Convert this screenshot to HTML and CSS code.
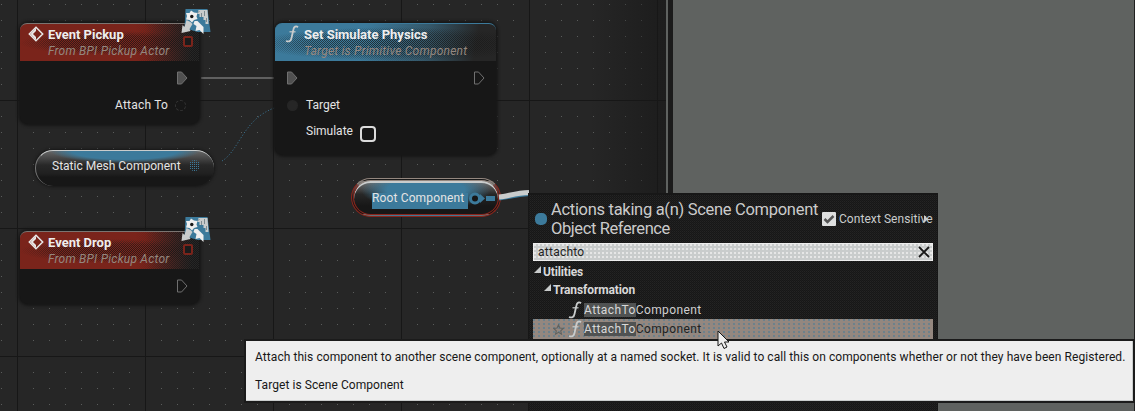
FILE: index.html
```html
<!DOCTYPE html>
<html lang="en">
<head>
<meta charset="utf-8">
<title>Event Graph</title>
<link rel="stylesheet" href="styles.css">
</head>
<body>
<svg class="defs" width="0" height="0">
  <defs>
    <symbol id="badge" viewBox="0 0 30 28">
      <path d="M4 1H26L29 24H16L3 20Z" fill="#3c7a9b"/>
      <path d="M17 2H26L27 16H24V12H22V9H18V6H16Z" fill="#c9cccc"/>
      <path d="M20 5V9M23 3V8M18 3L16 5M25 10V14" stroke="#7d8a8f"/>
      <path d="M5 12L9 14L11 16L8 21L9 23L0 25L1 17L3 19Z" fill="#c9cccc"/>
      <path d="M13 13L16 13L18 15L22 19L22 26L18 22L14 23L15 18L12 16Z" fill="#eee"/>
      <path d="M9.500 2.500L12.500 4.500L16 5L15 8.500L16 11L12.500 12L10.500 14.500L8 12L4.500 11.500L5.500 8L4.500 5L8 5Z" fill="#eee"/>
      <circle cx="10.300" cy="8.500" r="1.700" fill="#171717"/>
    </symbol>
    <symbol id="exec" viewBox="0 0 12 14">
      <path d="M1.500 1H5.500L11 7L5.500 13H1.500Z" fill="inherit" stroke="#707070"/>
    </symbol>
    <symbol id="func" viewBox="0 0 14 18">
      <path d="M13 2.200C11 .5 9 1.500 8.400 4.500L6.500 13C5.900 16 4.300 17.200 1 16" fill="none" stroke="#c9cccc" stroke-width="1.800"/>
      <path d="M4.500 6.800H10.500" stroke="#c9cccc" stroke-width="1.200"/>
    </symbol>
    <symbol id="event" viewBox="0 0 16 16">
      <path d="M8 1.300L14.700 8L8 14.700L1.300 8Z" fill="none" stroke="#e8e8e8" stroke-width="1.500"/>
      <path d="M8 2V14L2.500 8Z" fill="#e8e8e8"/><path d="M5 8L8 5V11Z" fill="#7a241b"/>
    </symbol>
  </defs>
</svg>
<main class="editor">
  <section class="graph">
    <svg class="wires" width="667" height="411">
      <path d="M201 78H274" stroke="#606060" stroke-width="2"/>
      <path d="M275 78H286" stroke="#3a3a3a" stroke-dasharray="2 1"/>
      <path d="M222 161C240 150 243 118 277 107" fill="none" stroke="#3c7a9b" stroke-dasharray="1 2"/>
    </svg>

    <article class="node event pickup">
      <header class="head red"><svg class="event-icon"><use href="#event"/></svg><div><h2 class="t-pickup">Event Pickup</h2><p class="t-from">From BPI Pickup Actor</p></div></header>
      <div class="pin out exec-row"><svg class="exec filled"><use href="#exec"/></svg></div>
      <div class="pin out attach"><span class="t-attach">Attach To</span><i class="round"></i></div>
      <i class="delegate"></i><svg class="badge"><use href="#badge"/></svg>
    </article>

    <article class="node physics">
      <header class="head blue"><svg class="func-icon"><use href="#func"/></svg><div><h2 class="t-physics">Set Simulate Physics</h2><p class="t-primitive">Target is Primitive Component</p></div></header>
      <div class="pin both"><svg class="exec filled"><use href="#exec"/></svg><svg class="exec"><use href="#exec"/></svg></div>
      <div class="pin target"><i class="round solid"></i><span class="t-target">Target</span></div>
      <div class="pin simulate"><span class="t-simulate">Simulate</span><i class="box"></i></div>
    </article>

    <article class="node event drop">
      <header class="head red"><svg class="event-icon"><use href="#event"/></svg><div><h2 class="t-drop">Event Drop</h2><p class="t-from">From BPI Pickup Actor</p></div></header>
      <div class="pin out exec-row"><svg class="exec"><use href="#exec"/></svg></div>
      <i class="delegate"></i><svg class="badge"><use href="#badge"/></svg>
    </article>

    <div class="pill mesh"><span class="t-mesh">Static Mesh Component</span><i class="mesh-pin"></i></div>
    <div class="pill root"><span class="t-root">Root Component</span></div>
    <svg class="wires" width="667" height="411">
      <circle cx="475" cy="198.500" r="4.500" fill="#171717" stroke="#3c7a9b" stroke-width="3"/>
      <path d="M480 194L485 198.500L480 203Z" fill="#3c7a9b"/>
      <path d="M486 198.500H495" stroke="#3c7a9b" stroke-width="5"/>
      <path d="M499 198C508 197 515 194.500 529 193.500" fill="none" stroke="#3c7a9b" stroke-width="5"/>
      <path d="M499 197C508 196 516 193 529 192.500" fill="none" stroke="#c9cccc" stroke-width="5"/>
    </svg>
  </section>
  <aside class="empty"></aside>
</main>

<section class="menu">
  <div class="menu-head">
    <i class="type-dot"></i>
    <h1><span class="t-title1">Actions taking a(n) Scene Component</span><br><span class="t-title2">Object Reference</span></h1>
    <label class="context"><svg width="14" height="14" viewBox="0 0 14 14"><rect width="14" height="14" rx="1" fill="#dedfdf"/><path d="M2.500 7L5.500 10L11.500 4" fill="none" stroke="#555" stroke-width="2.500"/></svg><span class="t-context">Context Sensitive</span></label>
    <i class="expander"></i>
  </div>
  <div class="search"><span class="t-search">attachto</span><svg width="12" height="12" viewBox="0 0 12 12"><path d="M1 1L11 11M11 1L1 11" stroke="#171717" stroke-width="1.800"/></svg></div>
  <div class="cat"><i></i><span class="t-util">Utilities</span></div>
  <div class="cat sub"><i></i><span class="t-trans">Transformation</span></div>
  <div class="item"><svg class="func-icon"><use href="#func"/></svg><span class="t-action"><mark>AttachTo</mark>Component</span></div>
  <div class="item selected"><svg class="star" viewBox="0 0 10 10"><path d="M5 .8L6.300 3.700L9.300 4L7 6.200L7.700 9.200L5 7.600L2.300 9.200L3 6.200L.7 4L3.700 3.700Z" fill="none" stroke="#5f6260"/></svg><svg class="func-icon"><use href="#func"/></svg><span class="t-action"><mark>AttachTo</mark>Component</span></div>
</section>

<aside class="tooltip"><p class="t-tip1">Attach this component to another scene component, optionally at a named socket. It is valid to call this on components whether or not they have been Registered.</p><p class="t-tip2">Target is Scene Component</p></aside>
<svg class="cursor" width="13" height="20" viewBox="0 0 13 20"><path d="M1 1V16L4.500 13L7 18.500L10 17L7.500 12H12Z" fill="#eee" stroke="#171717"/></svg>
</body>
</html>
```
FILE: styles.css
```css
* { box-sizing: border-box; }
body { margin: 0; width: 1135px; height: 411px; overflow: hidden; position: relative; background: #171717; color: #e4e4e4; font: 12px/16px Roboto, sans-serif; }
h1, h2, p { margin: 0; }
span, h2, p { white-space: nowrap; }
h2, p, span { width: max-content; }
svg { display: block; flex: none; }
i { display: block; flex: none; }
.defs { position: absolute; }
.editor { display: flex; height: 411px; }
.graph { position: relative; width: 673px; flex: none; border-right: 5px solid #1b1b1b; background:
  linear-gradient(#5f6260, #5f6260) 666px 0 / 2px 411px no-repeat,
  linear-gradient(90deg, transparent 590px, #1717178c 655px),
  linear-gradient(#171717, #171717) 0 100px / 100% 1px no-repeat,
  linear-gradient(#171717, #171717) 0 228px / 100% 1px no-repeat,
  linear-gradient(#171717, #171717) 0 356px / 100% 1px no-repeat,
  linear-gradient(90deg, #171717 1px, transparent 1px) 17px 0 / 128px 100%,
  conic-gradient(from 0deg at 1px 1px, transparent 270deg, #5a5c5b 270deg) 1px 4px / 16px 16px,
  #262626; }
.empty { flex: 1; background: #5f6260; border-right: 1px solid #202020; }
.wires { position: absolute; left: 0; top: 0; }

.node { position: absolute; border-radius: 8px; background: #171717; box-shadow: 0 0 3px 2px #171717; }
.pickup { left: 20px; top: 23px; width: 179px; height: 101px; }
.drop { left: 20px; top: 231px; width: 179px; height: 73px; }
.physics { left: 275px; top: 23px; width: 221px; height: 132px; }
.head { position: relative; display: flex; height: 38px; border-radius: 7px 7px 0 0; border-top: 1px solid #7b7471; }
.head::before { content: ""; position: absolute; inset: 0; background: conic-gradient(#171717 25%, transparent 0 50%, #171717 0 75%, transparent 0) 0 0 / 2px 2px; border-radius: inherit; }
.head > * { position: relative; }
.red { background: linear-gradient(90deg, #7a241b 70%, #262626 96%); padding-left: 8px; gap: 4px; }
.red::before { mask: radial-gradient(ellipse 95px 12px at 95px 19px, #000c, #000a 60%, transparent), linear-gradient(90deg, transparent 65%, #000); }
.blue { background: linear-gradient(100deg, #3c7a9b 40%, #35586a 68%, #262626 90%); padding-left: 10px; gap: 5px; border-color: #3c7a9b; }
.blue::before { mask: radial-gradient(ellipse 140px 17px at 120px 20px, #000c, #0009 65%, transparent); }
.head > svg, .head > div { z-index: 1; }
.head::before { position: absolute; }
.event-icon { width: 16px; height: 16px; margin-top: 2px; }
.func-icon { width: 14px; height: 18px; }
.blue .func-icon { margin-top: 1px; }
.head h2 { font-size: 13px; line-height: 17px; font-weight: 700; margin-top: 2px; color: #eee; }
.head p { font-size: 12px; line-height: 16px; font-style: italic; color: #94877f; letter-spacing: .23px; }
.pin { display: flex; align-items: center; }
.out { justify-content: flex-end; }
.exec-row { height: 16px; margin-top: 9px; padding-right: 11px; }
.attach { height: 16px; margin-top: 11px; padding-right: 13px; gap: 7px; letter-spacing: .2px; }
.exec { width: 12px; height: 14px; fill: none; }
.filled { fill: #505050; }
.round { width: 11px; height: 11px; border: 1px dashed #343434; border-radius: 50%; }
.solid { background: #262626; border-color: #262626; }
.both { height: 16px; justify-content: space-between; margin-top: 9px; padding: 0 11px; }
.target { height: 16px; margin-top: 11px; padding-left: 12px; gap: 8px; }
.simulate { height: 22px; margin-top: 9px; padding-left: 31px; gap: 7px; }
.simulate span { margin-top: -4px; }
.box { width: 16px; height: 16px; border: 2px solid #dcdcdc; border-radius: 4px; margin-top: 2px; }
.delegate { position: absolute; right: 6px; top: 13px; width: 10px; height: 11px; border: 2px solid #7a241b; border-radius: 2px; background: #1b1b1b; }
.badge { position: absolute; left: 161px; top: -15px; width: 31px; height: 28px; }

.pill { position: absolute; display: flex; align-items: center; }
.mesh { left: 35px; top: 150px; width: 179px; height: 36px; border-radius: 18px; padding: 0 14px 6px 16px; justify-content: space-between; border-top: 1px solid #c9cccc; border-left: 1px solid #777; background: radial-gradient(ellipse 75px 12px at 50% 0, #3c7a9b 70%, transparent), linear-gradient(#666, #282828 40%, #202020 65%, #171717 75%); box-shadow: 0 0 3px 1px #171717; }
.mesh-pin { width: 11px; height: 11px; border-radius: 50%; background: conic-gradient(#3c7a9b 25%, transparent 0) 0 0 / 2px 2px; }
.root { left: 351px; top: 178px; width: 150px; height: 39px; padding-left: 18px; letter-spacing: .14px; border-radius: 20px; border: 3px double #8b251c; border-top-color: #94877f; background: linear-gradient(#3c7a9b, #3c7a9b) 18px 12px / 96px 16px no-repeat, radial-gradient(ellipse 65px 20px at 50% 9px, #3c7a9b 60%, transparent), linear-gradient(#777, #272727 40%, #171717 75%); box-shadow: inset 0 2px 0 #c9cccc; }

.menu { position: absolute; left: 528px; top: 193px; width: 410px; height: 218px; padding: 0 5px; border: solid #171717; border-width: 2px 1px 0; background: conic-gradient(#242424 25%, #171717 0 50%, #1e1e1e 0 75%, #171717 0) 0 0 / 2px 2px; }
.menu-head { position: relative; display: flex; height: 48px; padding-top: 5px; }
.type-dot { width: 12px; height: 12px; margin: 13px 4px 0 1px; border-radius: 5px; background: #3c7a9b; }
h1 { font-size: 16.500px; line-height: 19px; font-weight: 400; color: #cbcbcb; width: 267px; letter-spacing: -.3px; }
h1 span, .t-action { display: inline-block; }
.t-title2 { letter-spacing: -.4px; }
.context { display: flex; align-items: center; gap: 3px; height: 16px; margin: 11px 0 0 4px; color: #c9cccc; letter-spacing: .06px; }
.expander { position: absolute; right: 4px; top: 20px; border-left: 4px solid #c9cccc; border-top: 4px solid transparent; border-bottom: 4px solid transparent; }
.search { height: 18px; width: 400px; margin-left: -1px; padding: 0 2px 0 4px; display: flex; align-items: center; justify-content: space-between; border: 1px solid #eee; color: #222; letter-spacing: .25px; background: radial-gradient(circle at 1px 1px, #e6e6e6 .8px, transparent 1px) 0 0 / 4px 4px, #c9cccc; }
.cat { display: flex; align-items: center; height: 18px; font-weight: 700; padding-top: 3px; gap: 2px; color: #d8d8d8; }
.cat .t-util { letter-spacing: -.15px; }
.cat .t-trans { letter-spacing: -.1px; }
.cat i { border-left: 7px solid transparent; border-bottom: 7px solid #c9cccc; margin-top: -4px; }
.sub { padding-left: 10px; }
.item { display: flex; align-items: center; height: 20px; width: 400px; margin-left: -1px; padding-left: 35px; gap: 2px; color: #d0d0d0; letter-spacing: .41px; }
.item:not(.selected) { height: 22px; padding-top: 3px; }
.selected { padding-left: 20px; color: #222; background: radial-gradient(circle at 1px 1px, #3c7a9bb0 .6px, transparent .9px) 0 0 / 5px 4px, #94877f; }
.star { width: 11px; height: 11px; margin-right: 2px; }
mark { background: #505252; color: #d8d8d8; }
.tooltip { position: absolute; left: 246px; top: 341px; width: 887px; height: 60px; padding: 8px 9px; background: #eee; color: #171717; border: solid #c9cccc; border-width: 0 1px 1px 0; box-shadow: 0 0 0 2px #1b1b1b; letter-spacing: .068px; }
.t-tip2 { margin-top: 12px; }
.cursor { position: absolute; left: 717px; top: 330px; }
```
